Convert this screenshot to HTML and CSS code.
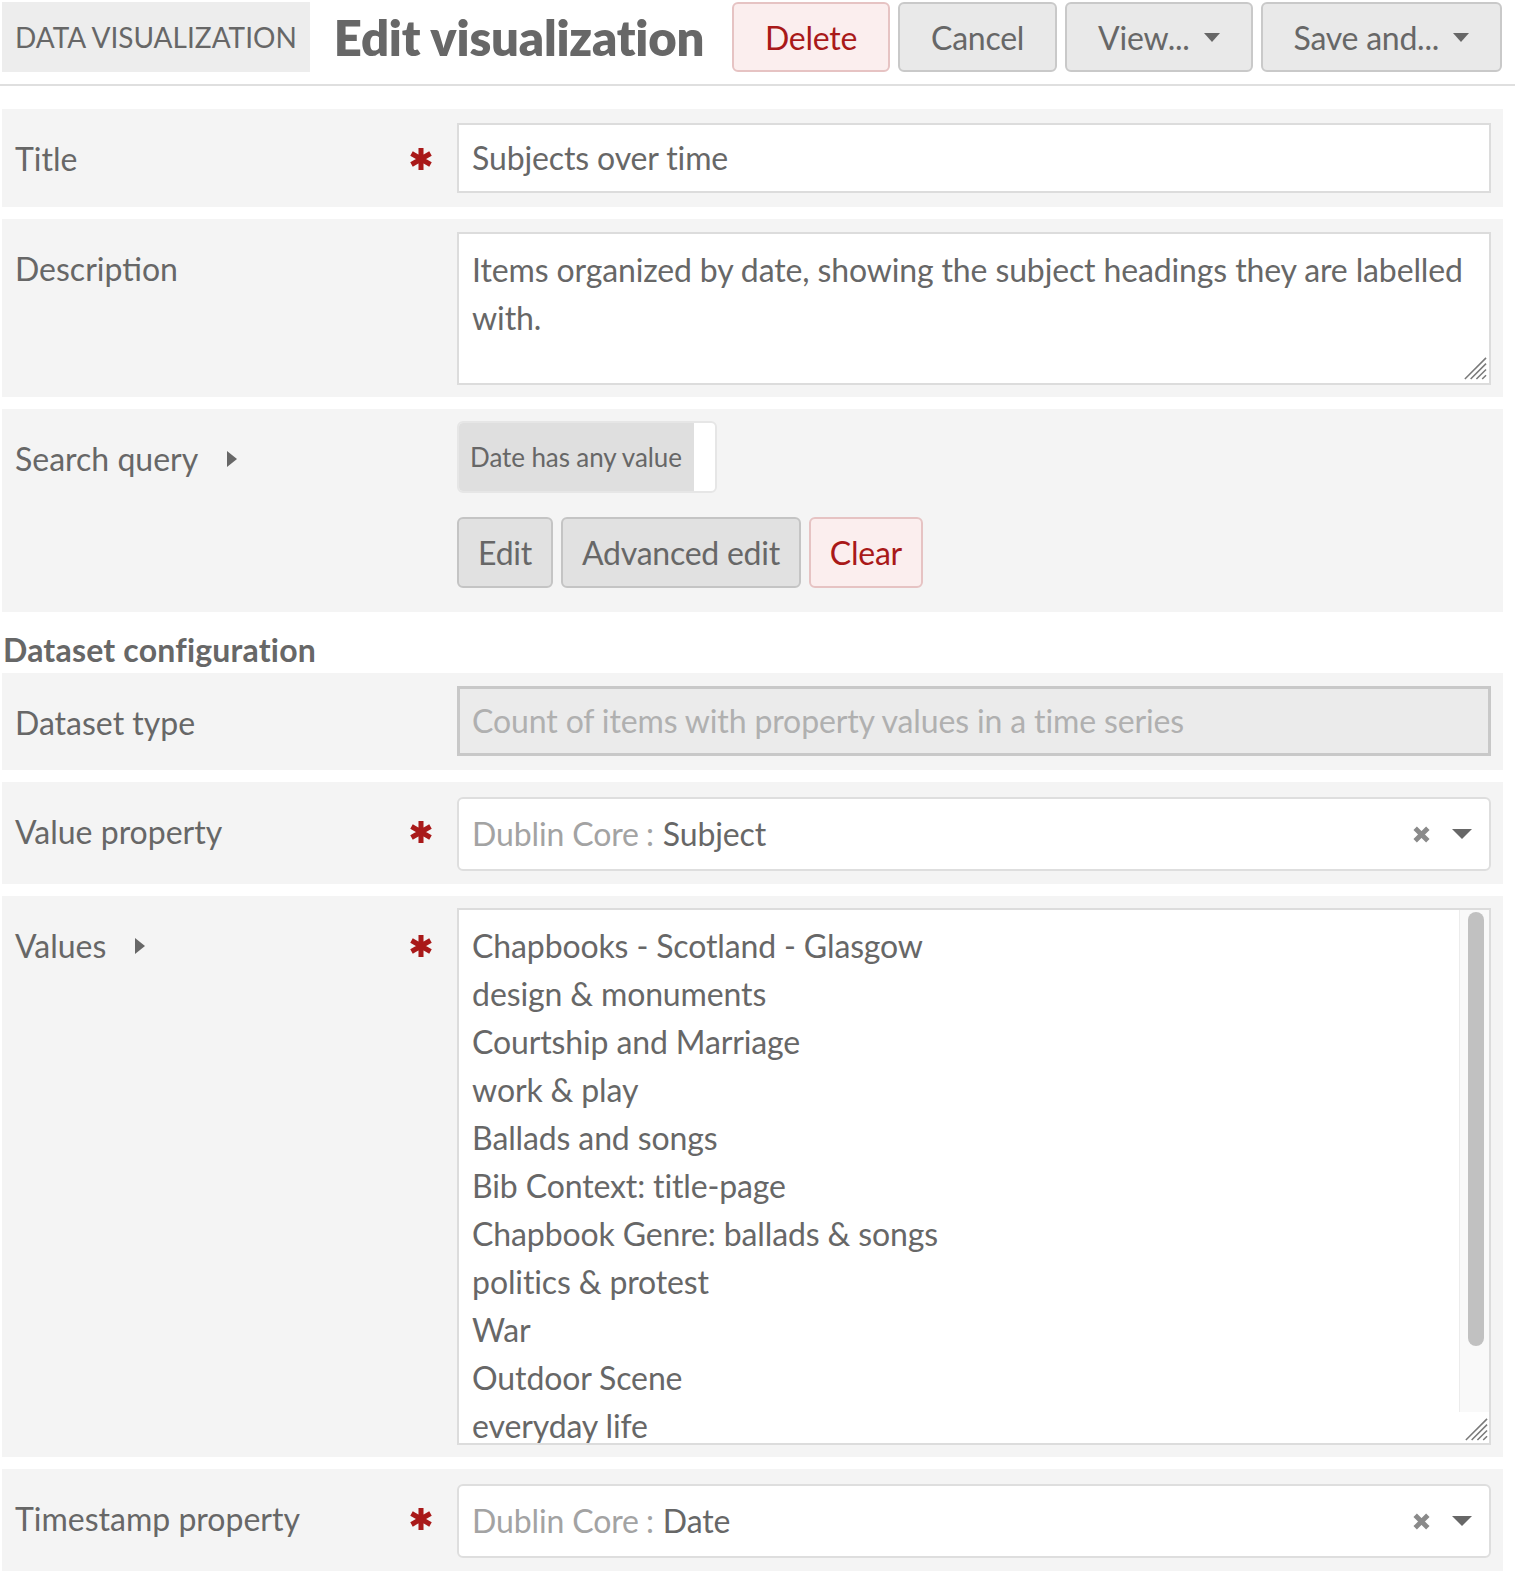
FILE: index.html
```html
<!DOCTYPE html>
<html lang="en">
<head>
<meta charset="utf-8">
<title>Edit visualization</title>
<link rel="stylesheet" href="styles.css">
</head>
<body>
<div class="page">
  <header class="top">
    <div class="subhead">Data visualization</div>
    <h1 class="page-title">Edit visualization</h1>
    <div class="actions">
      <button class="btn btn-danger">Delete</button>
      <button class="btn">Cancel</button>
      <button class="btn">View... <svg class="caret" viewBox="0 0 16 9"><polygon points="0,0 16,0 8,9"/></svg></button>
      <button class="btn">Save and... <svg class="caret" viewBox="0 0 16 9"><polygon points="0,0 16,0 8,9"/></svg></button>
    </div>
  </header>

  <main class="form">
    <div class="field">
      <div class="meta">
        <span class="label">Title</span>
        <svg class="req" viewBox="0 0 22 22"><path d="M11 1V21M2.3 6L19.7 16M2.3 16L19.7 6"/></svg>
      </div>
      <div class="inputs">
        <div class="text-input">Subjects over time</div>
      </div>
    </div>

    <div class="field">
      <div class="meta">
        <span class="label">Description</span>
      </div>
      <div class="inputs">
        <div class="textarea">Items organized by date, showing the subject headings they are labelled<br>with.
          <svg class="grip" viewBox="0 0 26 26"><path d="M25 3L3 25M25 9L9 25M25 15L15 25M25 21L21 25"/></svg>
        </div>
      </div>
    </div>

    <div class="field field-query">
      <div class="meta">
        <span class="label label-toggle">Search query <svg class="toggle" viewBox="0 0 10 16"><polygon points="0,0 10,8 0,16"/></svg></span>
      </div>
      <div class="inputs">
        <div class="chip"><span class="chip-text">Date has any value</span><span class="chip-end"></span></div>
        <div class="query-buttons">
          <button class="btn btn-small">Edit</button>
          <button class="btn btn-small">Advanced edit</button>
          <button class="btn btn-small btn-danger">Clear</button>
        </div>
      </div>
    </div>

    <h2 class="section">Dataset configuration</h2>

    <div class="field">
      <div class="meta">
        <span class="label">Dataset type</span>
      </div>
      <div class="inputs">
        <div class="disabled-select">Count of items with property values in a time series</div>
      </div>
    </div>

    <div class="field">
      <div class="meta">
        <span class="label">Value property</span>
        <svg class="req" viewBox="0 0 22 22"><path d="M11 1V21M2.3 6L19.7 16M2.3 16L19.7 6"/></svg>
      </div>
      <div class="inputs">
        <div class="select2">
          <span class="sel-text"><span class="vocab">Dublin Core <span class="colon">:</span></span> Subject</span>
          <svg class="clear" viewBox="0 0 18 18"><path d="M3 3L15 15M15 3L3 15"/></svg>
          <svg class="arrow" viewBox="0 0 20 10"><polygon points="0,0 20,0 10,10"/></svg>
        </div>
      </div>
    </div>

    <div class="field">
      <div class="meta">
        <span class="label label-toggle">Values <svg class="toggle" viewBox="0 0 10 16"><polygon points="0,0 10,8 0,16"/></svg></span>
        <svg class="req" viewBox="0 0 22 22"><path d="M11 1V21M2.3 6L19.7 16M2.3 16L19.7 6"/></svg>
      </div>
      <div class="inputs">
        <div class="multi">
          <ul class="options">
            <li>Chapbooks - Scotland - Glasgow</li>
            <li>design &amp; monuments</li>
            <li>Courtship and Marriage</li>
            <li>work &amp; play</li>
            <li>Ballads and songs</li>
            <li>Bib Context: title-page</li>
            <li>Chapbook Genre: ballads &amp; songs</li>
            <li>politics &amp; protest</li>
            <li>War</li>
            <li>Outdoor Scene</li>
            <li>everyday life</li>
          </ul>
          <div class="scrollbar">
            <div class="track"><div class="thumb"></div></div>
            <div class="corner">
              <svg class="grip-small" viewBox="0 0 26 26"><path d="M25 3L3 25M25 9L9 25M25 15L15 25M25 21L21 25"/></svg>
            </div>
          </div>
        </div>
      </div>
    </div>

    <div class="field">
      <div class="meta">
        <span class="label">Timestamp property</span>
        <svg class="req" viewBox="0 0 22 22"><path d="M11 1V21M2.3 6L19.7 16M2.3 16L19.7 6"/></svg>
      </div>
      <div class="inputs">
        <div class="select2">
          <span class="sel-text"><span class="vocab">Dublin Core <span class="colon">:</span></span> Date</span>
          <svg class="clear" viewBox="0 0 18 18"><path d="M3 3L15 15M15 3L3 15"/></svg>
          <svg class="arrow" viewBox="0 0 20 10"><polygon points="0,0 20,0 10,10"/></svg>
        </div>
      </div>
    </div>
  </main>
</div>
</body>
</html>
```
FILE: styles.css
```css
* {
  box-sizing: border-box;
}

html,
body {
  margin: 0;
  background: #ffffff;
}

body {
  font-family: Lato, "Open Sans", "Liberation Sans", sans-serif;
  font-size: 32px;
  line-height: 48px;
  letter-spacing: -0.13px;
  color: #676767;
}

.page {
  padding: 2px 12px 0 2px;
}

/* Header */
.top {
  display: flex;
  align-items: center;
  margin: 0 -12px 0 -2px;
  padding: 0 13px 12px 2px;
  border-bottom: 2px solid #dfdfdf;
}

.subhead {
  height: 70px;
  padding: 0 13px;
  background: #ededed;
  font-size: 28px;
  line-height: 70px;
  letter-spacing: 0;
  text-transform: uppercase;
  white-space: nowrap;
}

.page-title {
  margin: 0 0 0 24px;
  font-size: 49px;
  font-weight: 800;
  line-height: 70px;
  letter-spacing: -0.2px;
  white-space: nowrap;
}

.actions {
  display: flex;
  gap: 8px;
  margin-left: auto;
}

.btn {
  display: inline-flex;
  align-items: center;
  height: 70px;
  padding: 0 31px;
  font-family: inherit;
  font-size: 32px;
  letter-spacing: -0.25px;
  color: #676767;
  background: #e9e9e9;
  border: 2px solid #c9c9c9;
  border-radius: 6px;
  white-space: nowrap;
}

.btn-danger {
  color: #a91919;
  background: #fbeeee;
  border-color: #e6c3c3;
}

.caret {
  width: 16px;
  height: 9px;
  margin-left: 14px;
  fill: #676767;
}

/* Form */
.form {
  padding-top: 23px;
}

.field {
  display: flex;
  align-items: flex-start;
  padding: 12px;
  margin-bottom: 12px;
  background: #f4f4f4;
}

.meta {
  flex: none;
  display: flex;
  align-items: center;
  width: 30%;
  height: 73px;
  padding: 3px 24px 0 1px;
}

.label {
  flex: 1;
  letter-spacing: 0;
  white-space: nowrap;
}

.label-toggle {
  display: flex;
  align-items: center;
}

.toggle {
  width: 10px;
  height: 16px;
  margin-left: 29px;
  fill: #676767;
}

.req {
  width: 24px;
  height: 24px;
  stroke: #a91919;
  stroke-width: 4.6;
  fill: none;
}

.inputs {
  flex: 1;
  min-width: 0;
}

.text-input {
  height: 70px;
  margin: 2px 0 2px;
  padding: 0 13px;
  background: #ffffff;
  border: 2px solid #dcdcdc;
  line-height: 66px;
}

.textarea {
  position: relative;
  height: 153px;
  margin-top: 1px;
  padding: 12px 13px;
  background: #ffffff;
  border: 2px solid #dcdcdc;
}

.grip {
  position: absolute;
  right: 2px;
  bottom: 3px;
  width: 25px;
  height: 25px;
  stroke: #7a7a7a;
  stroke-width: 1.6;
}

/* Search query */
.chip {
  display: inline-flex;
  height: 72px;
  background: #ffffff;
  border: 2px solid #e6e6e6;
  border-radius: 6px;
  overflow: hidden;
}

.chip-text {
  padding: 0 12px 0 11px;
  background: #dfdfdf;
  font-size: 26px;
  line-height: 68px;
  letter-spacing: -0.1px;
}

.chip-end {
  width: 21px;
}

.query-buttons {
  display: flex;
  gap: 8px;
  margin: 24px 0 12px;
}

.btn-small {
  height: 71px;
  padding: 0 19px;
  background: #e1e1e1;
  border-color: #c4c4c4;
}

.btn-small.btn-danger {
  background: #fbeeee;
  border-color: #e6c3c3;
}

.section {
  margin: 0;
  padding: 2px 0 0 1px;
  height: 49px;
  font-size: 32px;
  font-weight: 700;
  line-height: 48px;
  letter-spacing: 0.2px;
}

/* Selects */
.disabled-select {
  height: 70px;
  margin-top: 1px;
  padding: 0 12px;
  background: #ebebeb;
  border: 3px solid #c8c8c8;
  color: #b0b0b0;
  line-height: 64px;
  white-space: nowrap;
}

.select2 {
  display: flex;
  align-items: center;
  height: 74px;
  margin: 3px 0 1px;
  padding: 0 17px 0 13px;
  background: #ffffff;
  border: 2px solid #dedede;
  border-radius: 6px;
}

.sel-text {
  flex: 1;
  white-space: nowrap;
}

.vocab {
  color: #a3a3a3;
}

.colon {
  margin-left: -1px;
  margin-right: 1px;
}

.clear {
  width: 19px;
  height: 19px;
  stroke: #8a8a8a;
  stroke-width: 4.6;
}

.arrow {
  width: 20px;
  height: 10px;
  margin-left: 21px;
  fill: #676767;
}

/* Multi select */
.multi {
  display: flex;
  height: 537px;
  background: #ffffff;
  border: 2px solid #dcdcdc;
  overflow: hidden;
}

.options {
  flex: 1;
  margin: 0;
  padding: 12px 13px 0;
  list-style: none;
  overflow: hidden;
}

.options li {
  height: 48px;
  white-space: nowrap;
}

.scrollbar {
  flex: none;
  display: flex;
  flex-direction: column;
  width: 30px;
}

.track {
  flex: 1;
  padding: 2px 5px 0 8px;
  background: #f9f9f9;
  border-left: 1px solid #ececec;
}

.thumb {
  height: 434px;
  background: #c1c1c1;
  border-radius: 8px;
}

.corner {
  position: relative;
  height: 31px;
  background: #ffffff;
}

.grip-small {
  position: absolute;
  right: 1px;
  bottom: 2px;
  width: 25px;
  height: 25px;
  stroke: #7a7a7a;
  stroke-width: 1.6;
}
```
